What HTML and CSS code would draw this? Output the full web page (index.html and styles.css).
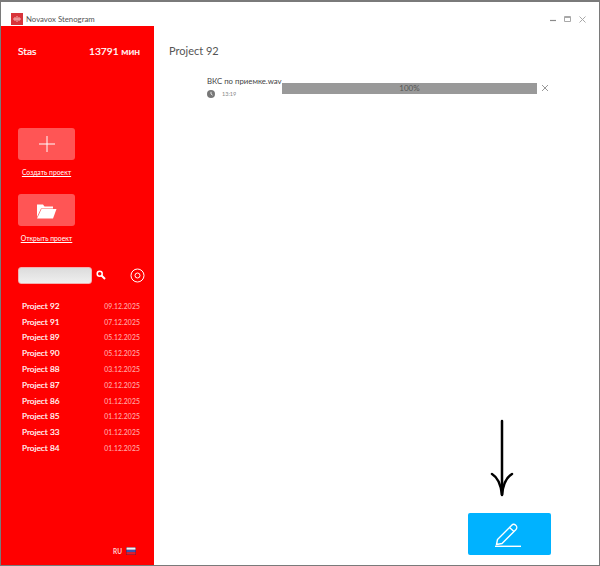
FILE: index.html
```html
<!DOCTYPE html>
<html lang="ru">
<head>
<meta charset="utf-8">
<title>Novavox Stenogram</title>
<link rel="stylesheet" href="styles.css">
</head>
<body>
<div class="window">
  <header class="titlebar">
    <div class="app-logo"><svg viewBox="0 0 12 12" width="12" height="12"><rect width="12" height="12" fill="#d8343a"/><path d="M2 6h8M4 4v4M6 3v6M8 4v4" stroke="#f3b5b5" stroke-width="1" fill="none"/></svg></div>
    <span class="app-name">Novavox Stenogram</span>
    <div class="win-controls">
      <svg viewBox="0 0 6 6" width="6" height="6"><path d="M0 4.500h6" stroke="#8a8a8a" stroke-width="1.200"/></svg>
      <svg viewBox="0 0 7 6" width="7" height="6"><path d="M.5 .5h6v5h-6z" stroke="#a8a8a8" fill="none"/><path d="M.5 1.500h6" stroke="#a8a8a8"/></svg>
      <svg viewBox="0 0 7 7" width="7" height="7"><path d="M.5 .5l6 6M6.500 .5l-6 6" stroke="#a8a8a8" stroke-width="1"/></svg>
    </div>
  </header>
  <div class="body-row">
    <aside class="sidebar">
      <div class="account"><span>Stas</span><span>13791 мин</span></div>
      <div class="action">
        <button class="action-btn" type="button"><svg viewBox="0 0 18 18" width="18" height="18"><path d="M9 1v16M1 9h16" stroke="#fff" stroke-width="1" fill="none"/></svg></button>
        <a class="action-label">Создать проект</a>
      </div>
      <div class="action action-open">
        <button class="action-btn" type="button"><svg viewBox="0 0 21 17" width="21" height="17"><path d="M1 15V2.500h6l1.500 2h8.500v2H5L1 15z" fill="#fff"/><path d="M1 16.500h16l3.500-9.500H5.500z" fill="#fff"/></svg></button>
        <a class="action-label">Открыть проект</a>
      </div>
      <div class="search-row">
        <div class="search-field"></div>
        <svg class="search-icon" viewBox="0 0 10 10" width="10" height="10"><circle cx="3.700" cy="3.700" r="2.500" fill="none" stroke="#fff" stroke-width="1.500"/><path d="M5.500 5.500l3.500 3.500" stroke="#fff" stroke-width="2"/></svg>
        <svg class="settings-icon" viewBox="0 0 15 15" width="15" height="15"><circle cx="7.500" cy="7.500" r="6.500" fill="none" stroke="#fff" stroke-width="1"/><circle cx="7.500" cy="7.500" r="2.500" fill="none" stroke="#fff" stroke-width="1"/></svg>
      </div>
      <ul class="projects">
        <li><span class="p-name">Project 92</span><span class="p-date">09.12.2025</span></li>
        <li><span class="p-name">Project 91</span><span class="p-date">07.12.2025</span></li>
        <li><span class="p-name">Project 89</span><span class="p-date">05.12.2025</span></li>
        <li><span class="p-name">Project 90</span><span class="p-date">05.12.2025</span></li>
        <li><span class="p-name">Project 88</span><span class="p-date">03.12.2025</span></li>
        <li><span class="p-name">Project 87</span><span class="p-date">02.12.2025</span></li>
        <li><span class="p-name">Project 86</span><span class="p-date">01.12.2025</span></li>
        <li><span class="p-name">Project 85</span><span class="p-date">01.12.2025</span></li>
        <li><span class="p-name">Project 33</span><span class="p-date">01.12.2025</span></li>
        <li><span class="p-name">Project 84</span><span class="p-date">01.12.2025</span></li>
      </ul>
      <div class="lang"><span>RU</span><svg viewBox="0 0 10 8" width="10" height="8"><rect width="10" height="8" fill="#7a1030"/><rect x=".5" y=".5" width="9" height="2.300" fill="#f4f4f4"/><rect x=".5" y="2.800" width="9" height="2.300" fill="#3a55b0"/><rect x=".5" y="5.100" width="9" height="2.400" fill="#e02030"/></svg></div>
    </aside>
    <main class="content">
      <h1 class="project-title">Project 92</h1>
      <div class="file-row">
        <div class="file-info">
          <div class="file-name">ВКС по приемке.wav</div>
          <div class="file-meta">
            <svg viewBox="0 0 8 8" width="8" height="8"><circle cx="4" cy="4" r="4" fill="#777"/><path d="M4 1.800V4l1.600 1.200" stroke="#fff" stroke-width=".8" fill="none"/></svg>
            <span>13:19</span>
          </div>
        </div>
        <div class="progress">100%</div>
        <svg class="file-close" viewBox="0 0 8 8" width="8" height="8"><path d="M1 1l6 6M7 1l-6 6" stroke="#999" stroke-width="1"/></svg>
      </div>
      <button class="edit-btn" type="button"><svg viewBox="0 0 28 26" width="28" height="26"><path d="M3.500 18.500L17.500 4.500a2.800 2.800 0 0 1 4.500 4L8 22.500l-5.500 1z" fill="none" stroke="#fff" stroke-width="1.400" stroke-linejoin="round"/><path d="M15.500 6.500l4.500 4" stroke="#fff" stroke-width="1.400"/><path d="M1 25.300h26" stroke="#fff" stroke-width="1.400"/></svg></button>
      <svg class="arrow" viewBox="0 0 24 80" width="24" height="80"><path d="M12 2V76" stroke="#000" stroke-width="2.500" fill="none" stroke-linecap="round"/><path d="M2 55c5 3 9 10 10 21c1-11 5-18 10-21" stroke="#000" stroke-width="2.500" fill="none" stroke-linecap="round"/></svg>
    </main>
  </div>
</div>
</body>
</html>
```
FILE: styles.css
```css
* { box-sizing: border-box; }
html, body { margin: 0; padding: 0; height: 100%; }
body { font-family: "Lato", "Liberation Sans", sans-serif; background: #fff; }
.window {
  width: 600px; height: 566px;
  display: flex; flex-direction: column;
  border: 1px solid #7a7a7a; border-top-width: 2px;
  background: #fff;
}
.titlebar {
  height: 24px; flex: none;
  display: flex; align-items: center;
  padding: 10px 0 0 10px;
}
.app-logo { width: 12px; height: 12px; line-height: 0; }
.app-name { margin-left: 3px; font-size: 7.800px; color: #555; }
.win-controls { margin-left: auto; margin-right: 13px; display: flex; gap: 8px; align-items: center; }
.body-row { flex: 1; display: flex; min-height: 0; }
.sidebar {
  width: 153px; flex: none;
  background: #ff0000; color: #fff;
  display: flex; flex-direction: column;
  padding: 0 14px 0 17px;
  position: relative;
}
.account {
  display: flex; justify-content: space-between;
  font-size: 10.200px; font-weight: 400;
  padding-top: 18px; line-height: 14px;
  -webkit-text-stroke: .2px #fff;
}
.action { display: flex; flex-direction: column; align-items: flex-start; margin-top: 70px; }
.action-open { margin-top: 17px; }
.action-btn {
  width: 57px; height: 32px; margin: 0; padding: 0;
  background: #ff5555; border: none; border-radius: 3px;
  display: flex; align-items: center; justify-content: center;
}
.action-label {
  width: 57px; text-align: center; white-space: nowrap;
  display: flex; justify-content: center;
  font-size: 6.800px; font-weight: 400; text-decoration: underline;
  margin-top: 7px; line-height: 10px;
}
.search-row { display: flex; align-items: center; margin-top: 23px; height: 18px; }
.search-field {
  width: 74px; height: 17px; flex: none;
  background: linear-gradient(#dcdcdc, #efefef); border-radius: 3px;
  border: 1px solid #f2b0b0;
}
.search-icon { margin-left: 4px; flex: none; }
.settings-icon { margin-left: 24px; flex: none; }
.projects { list-style: none; margin: 14px 0 0; padding: 0 0 0 4px; }
.projects li {
  display: flex; justify-content: space-between; align-items: center;
  height: 15.800px;
}
.p-name { font-size: 8.300px; font-weight: 400; color: #fff; -webkit-text-stroke: .15px #fff; }
.p-date { font-size: 6.800px; font-weight: 400; color: #ffa8a8; letter-spacing: .1px; -webkit-text-stroke: .1px #ffa8a8; }
.lang {
  position: absolute; right: 18px; bottom: 10px;
  display: flex; align-items: center; gap: 4px;
  font-size: 6.500px; font-weight: 700; color: #ffd0d0;
}
.content { flex: 1; position: relative; display: flex; flex-direction: column; padding: 0 48px 10px 15px; min-width: 0; }
.project-title { margin: 17px 0 0; font-size: 11px; line-height: 15px; font-weight: 400; color: #555; }
.file-row { display: flex; align-items: flex-start; margin-top: 18px; padding-left: 38px; position: relative; }
.file-info { width: 75px; flex: none; }
.file-name { font-size: 7.800px; line-height: 11px; color: #444; white-space: nowrap; }
.file-meta { display: flex; align-items: center; gap: 7px; margin-top: 3px; font-size: 5.500px; color: #888; }
.progress {
  width: 255px; height: 11px; margin-top: 7px;
  background: #999; color: #555; font-size: 8px; line-height: 11px; text-align: center;
}
.file-close { margin: 8px 0 0 4px; }
.edit-btn {
  margin: auto 0 0 auto;
  width: 83px; height: 42px; padding: 0;
  background: #00b2ff; border: none; border-radius: 2px;
  display: flex; align-items: center; justify-content: center;
  align-self: flex-end;
}
.edit-btn svg { margin-right: 4px; }
.arrow { position: absolute; right: 85px; bottom: 66px; }
```
